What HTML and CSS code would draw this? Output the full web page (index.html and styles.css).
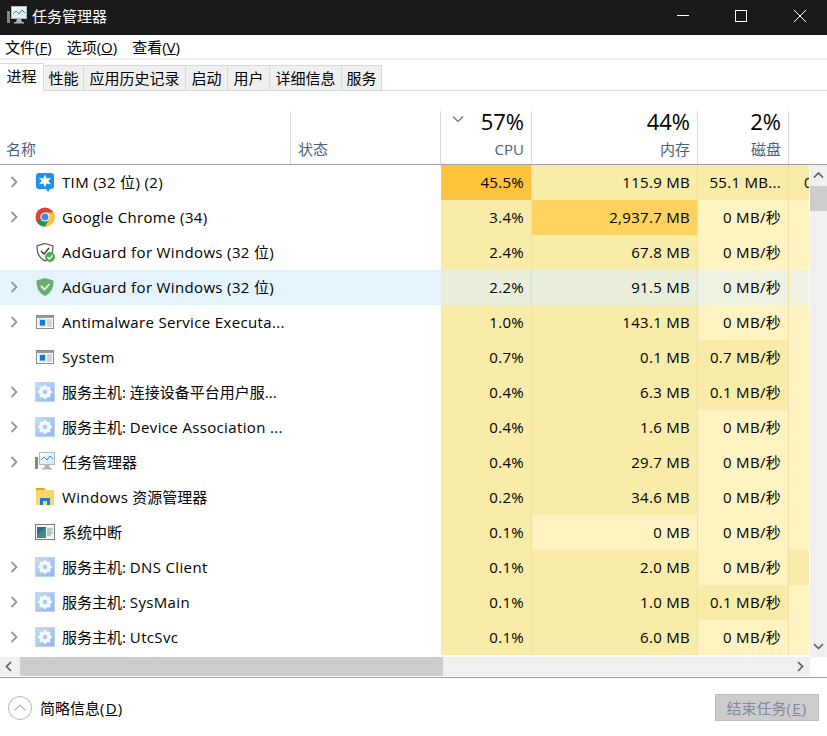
FILE: index.html
```html
<!DOCTYPE html>
<html lang="zh">
<head>
<meta charset="utf-8">
<title>任务管理器</title>
<link rel="stylesheet" href="styles.css">
</head>
<body>
<svg class="defs" width="0" height="0">
  <defs>
    <linearGradient id="gearbg" x1="0" y1="0" x2="1" y2="1"><stop offset="0" stop-color="#c3dcf6"/><stop offset="1" stop-color="#8fb6e6"/></linearGradient>
    <linearGradient id="screen" x1="0" y1="0" x2="1" y2="1"><stop offset="0" stop-color="#ffffff"/><stop offset="1" stop-color="#cfe6f8"/></linearGradient>
    <symbol id="arrow" viewBox="0 0 10 12"><path d="M2.500 1 7.500 6 2.500 11" fill="none" stroke="#969696" stroke-width="1.800"/></symbol>
    <symbol id="tm" viewBox="0 0 20 20">
      <rect x="0" y="5" width="3" height="12" fill="#7f8a80"/><rect x=".8" y="6" width="1.400" height="2" fill="#4fc04f"/>
      <rect x="4.500" y=".5" width="15" height="12" fill="url(#screen)" stroke="#b4b8bc"/>
      <path d="M6 8 9 5l3 3 3-4 3 3" fill="none" stroke="#2f88d8" stroke-width="1"/>
      <path d="M10 13h4l1 3h2v1.500H7V16h2z" fill="#b0b4b7"/>
    </symbol>
    <symbol id="gear" viewBox="0 0 20 20">
      <rect x=".5" y=".5" width="19" height="19" fill="url(#gearbg)" stroke="#bcd5f0"/>
      <circle cx="10" cy="10" r="4.500" fill="none" stroke="#f5f9fe" stroke-width="3"/>
      <path d="M10 3v14M3 10h14M5 5l10 10M15 5 5 15" stroke="#f5f9fe" stroke-width="2.200"/>
      <circle cx="10" cy="10" r="2.300" fill="#a9c8ee"/>
    </symbol>
    <symbol id="win" viewBox="0 0 18 14">
      <rect x=".5" y=".5" width="17" height="13" fill="#fff" stroke="#8b8b8b"/>
      <rect x="1" y="1" width="16" height="2" fill="#9a9a9a"/>
      <rect x="2.500" y="3.500" width="7.500" height="8" fill="#c5e0f6"/>
      <rect x="4" y="5" width="5" height="5.500" fill="#0f78d4"/>
      <path d="M11 5h5M11 7h5M11 9h5M11 11h5" stroke="#a8a8a8"/>
    </symbol>
  </defs>
</svg>

<div class="titlebar">
  <svg class="ticon" width="20" height="20"><use href="#tm"/></svg>
  <span class="ttext">任务管理器</span>
  <div class="winctl">
    <svg width="12" height="12" viewBox="0 0 12 12"><path d="M0 5.500h12" stroke="#fff"/></svg>
    <svg width="12" height="12" viewBox="0 0 12 12"><rect x=".5" y=".5" width="11" height="11" fill="none" stroke="#fff"/></svg>
    <svg class="closeic" width="12" height="12" viewBox="0 0 12 12"><path d="M0 0l12 12M12 0 0 12" stroke="#fff"/></svg>
  </div>
</div>

<div class="menubar">
  <span>文件(<u>F</u>)</span><span>选项(<u>O</u>)</span><span>查看(<u>V</u>)</span>
</div>

<div class="tabs">
  <span class="tab active">进程</span><span class="tab t2b">性能</span><span class="tab t4">应用历史记录</span><span class="tab t2">启动</span><span class="tab t2">用户</span><span class="tab t3">详细信息</span><span class="tab t2b">服务</span>
</div>

<div class="header">
  <div class="h-name hcell"><span class="hlabel">名称</span></div>
  <div class="h-status hcell"><span class="hlabel">状态</span></div>
  <div class="hcell num cpuhead">
    <svg class="sort" width="12" height="8" viewBox="0 0 12 8"><path d="M1 1.500 6 6.500 11 1.500" fill="none" stroke="#5f7490" stroke-width="1.200"/></svg>
    <span class="pct">57%</span><span class="hlabel">CPU</span>
  </div>
  <div class="hcell num"><span class="pct">44%</span><span class="hlabel">内存</span></div>
  <div class="hcell num"><span class="pct">2%</span><span class="hlabel">磁盘</span></div>
  <div class="hcell num clip"></div>
</div>

<div class="main">
  <div class="rows">
    <div class="row">
      <div class="name"><svg class="exp"><use href="#arrow"/></svg><svg class="ic" viewBox="0 0 20 20"><path d="M4 1h12q3 0 3 3v10q0 3-3 3h-1l-2 3-2-3H4q-3 0-3-3V4q0-3 3-3z" fill="#1e90f0"/><path d="M10 2.500l1.600 4 4.400-.8-2.800 3.300 2.800 3.300-4.400-.8-1.600 4-1.600-4-4.400.8 2.800-3.300L4 5.700l4.400.8z" fill="#fff"/></svg><span class="nm lat">TIM (32 位) (2)</span></div>
      <div class="c h4">45.5%</div><div class="c h1">115.9 MB</div><div class="c h1">55.1 MB...</div><div class="c h1 clipc">0</div>
    </div>
    <div class="row">
      <div class="name"><svg class="exp"><use href="#arrow"/></svg><svg class="ic" viewBox="0 0 20 20"><circle cx="10" cy="10" r="9.500" fill="#db4437"/><path d="M10 10 1.800 14.800A9.500 9.500 0 0 0 10 19.500L14 10.500z" fill="#0f9d58"/><path d="M1.800 5.200 1 10 1.800 14.800 10 10z" fill="#db4437"/><path d="M10 5.500h8.700A9.500 9.500 0 0 1 10 19.500l4-7z" fill="#fdc52f"/><circle cx="10" cy="10" r="4.600" fill="#fff"/><circle cx="10" cy="10" r="3.500" fill="#4285f4"/></svg><span class="nm lat">Google Chrome (34)</span></div>
      <div class="c h1">3.4%</div><div class="c h3">2,937.7 MB</div><div class="c h0">0 MB/秒</div><div class="c h0"></div>
    </div>
    <div class="row">
      <div class="name"><span class="exp"></span><svg class="ic" viewBox="0 0 20 20"><path d="M10 1.500 18 4c0 6-1 11-8 15C3 15 2 10 2 4z" fill="#fff" stroke="#555" stroke-width="1.200"/><path d="M6 9l3 3 5-6" fill="none" stroke="#333" stroke-width="1.400"/><circle cx="15" cy="15" r="5" fill="#4bae4f"/><path d="M12.500 15l2 2 3-3.500" fill="none" stroke="#fff" stroke-width="1.400"/></svg><span class="nm lat">AdGuard for Windows (32 位)</span></div>
      <div class="c h1">2.4%</div><div class="c h1">67.8 MB</div><div class="c h0">0 MB/秒</div><div class="c h0"></div>
    </div>
    <div class="row hover">
      <div class="name"><svg class="exp"><use href="#arrow"/></svg><svg class="ic" viewBox="0 0 20 20"><path d="M10 1 18.500 3.500C18.500 10 17 15.500 10 19 3 15.500 1.500 10 1.500 3.500z" fill="#68ae6c"/><path d="M6 9l3.500 3.500L14.500 7" fill="none" stroke="#e8f5e8" stroke-width="1.800"/></svg><span class="nm lat">AdGuard for Windows (32 位)</span></div>
      <div class="c s1">2.2%</div><div class="c s1">91.5 MB</div><div class="c s0">0 MB/秒</div><div class="c s0"></div>
    </div>
    <div class="row">
      <div class="name"><svg class="exp"><use href="#arrow"/></svg><svg class="ic winic"><use href="#win"/></svg><span class="nm lat">Antimalware Service Executa...</span></div>
      <div class="c h1">1.0%</div><div class="c h1">143.1 MB</div><div class="c h0">0 MB/秒</div><div class="c h0"></div>
    </div>
    <div class="row">
      <div class="name"><span class="exp"></span><svg class="ic winic"><use href="#win"/></svg><span class="nm lat">System</span></div>
      <div class="c h1">0.7%</div><div class="c h1">0.1 MB</div><div class="c h1">0.7 MB/秒</div><div class="c h0"></div>
    </div>
    <div class="row">
      <div class="name"><svg class="exp"><use href="#arrow"/></svg><svg class="ic"><use href="#gear"/></svg><span class="nm">服务主机: 连接设备平台用户服...</span></div>
      <div class="c h1">0.4%</div><div class="c h1">6.3 MB</div><div class="c h1">0.1 MB/秒</div><div class="c h0"></div>
    </div>
    <div class="row">
      <div class="name"><svg class="exp"><use href="#arrow"/></svg><svg class="ic"><use href="#gear"/></svg><span class="nm">服务主机: <span class="lat">Device Association ...</span></span></div>
      <div class="c h1">0.4%</div><div class="c h1">1.6 MB</div><div class="c h0">0 MB/秒</div><div class="c h0"></div>
    </div>
    <div class="row">
      <div class="name"><svg class="exp"><use href="#arrow"/></svg><svg class="ic"><use href="#tm"/></svg><span class="nm">任务管理器</span></div>
      <div class="c h1">0.4%</div><div class="c h1">29.7 MB</div><div class="c h0">0 MB/秒</div><div class="c h0"></div>
    </div>
    <div class="row">
      <div class="name"><span class="exp"></span><svg class="ic" viewBox="0 0 20 20"><path d="M1 1h8l2 2H1z" fill="#e2a614"/><rect x="1" y="3" width="18" height="15" fill="#fbd66a"/><path d="M5 18v-7h10v7h-3v-4H8v4z" fill="#1a7ed0"/></svg><span class="nm"><span class="lat">Windows</span> 资源管理器</span></div>
      <div class="c h1">0.2%</div><div class="c h1">34.6 MB</div><div class="c h0">0 MB/秒</div><div class="c h0"></div>
    </div>
    <div class="row">
      <div class="name"><span class="exp"></span><svg class="ic" viewBox="0 0 20 20"><rect x=".5" y="2.500" width="19" height="15" fill="#f4f4f4" stroke="#7b7f85"/><rect x="2" y="5" width="9" height="11" fill="#3f8f7d"/><path d="M2 5h9L2 13z" fill="#2d6b8f"/><path d="M12 7h6M12 9h5M12 11h6M12 13h4" stroke="#8aa08a"/></svg><span class="nm">系统中断</span></div>
      <div class="c h1">0.1%</div><div class="c h0">0 MB</div><div class="c h0">0 MB/秒</div><div class="c h0"></div>
    </div>
    <div class="row">
      <div class="name"><svg class="exp"><use href="#arrow"/></svg><svg class="ic"><use href="#gear"/></svg><span class="nm">服务主机: <span class="lat">DNS Client</span></span></div>
      <div class="c h1">0.1%</div><div class="c h1">2.0 MB</div><div class="c h0">0 MB/秒</div><div class="c h1"></div>
    </div>
    <div class="row">
      <div class="name"><svg class="exp"><use href="#arrow"/></svg><svg class="ic"><use href="#gear"/></svg><span class="nm">服务主机: <span class="lat">SysMain</span></span></div>
      <div class="c h1">0.1%</div><div class="c h1">1.0 MB</div><div class="c h1">0.1 MB/秒</div><div class="c h0"></div>
    </div>
    <div class="row">
      <div class="name"><svg class="exp"><use href="#arrow"/></svg><svg class="ic"><use href="#gear"/></svg><span class="nm">服务主机: <span class="lat">UtcSvc</span></span></div>
      <div class="c h1">0.1%</div><div class="c h1">6.0 MB</div><div class="c h0">0 MB/秒</div><div class="c h0"></div>
    </div>
  </div>
  <div class="vscroll">
    <svg class="sbtn" width="17" height="21" viewBox="0 0 17 21"><path d="M4 12.500 8.500 8 13 12.500" fill="none" stroke="#606060" stroke-width="1.700"/></svg>
    <div class="vtrack"><div class="vthumb"></div></div>
    <svg class="sbtn" width="17" height="21" viewBox="0 0 17 21"><path d="M4 8 8.500 12.500 13 8" fill="none" stroke="#606060" stroke-width="1.700"/></svg>
  </div>
</div>

<div class="hscroll">
  <div class="hbar">
    <svg class="hbtn" width="20" height="19" viewBox="0 0 20 19"><path d="M11 5 6.500 9.500 11 14" fill="none" stroke="#606060" stroke-width="1.700"/></svg>
    <div class="hthumb"></div>
    <svg class="hbtn rbtn" width="20" height="19" viewBox="0 0 20 19"><path d="M8 5 12.500 9.500 8 14" fill="none" stroke="#606060" stroke-width="1.700"/></svg>
  </div>
</div>

<div class="footer">
  <div class="less">
    <svg width="24" height="24" viewBox="0 0 24 24"><circle cx="12" cy="12" r="11.500" fill="none" stroke="#b4b4b4"/><path d="M6.500 14.500 12 9l5.500 5.500" fill="none" stroke="#b4b4b4" stroke-width="1.200"/></svg>
    <span>简略信息<span class="wide">(<u>D</u>)</span></span>
  </div>
  <div class="endtask">结束任务<span class="wide">(<u>E</u>)</span></div>
</div>
</body>
</html>
```

FILE: styles.css
```css
* { box-sizing: border-box; }
html, body { margin: 0; padding: 0; }
body {
  width: 827px; height: 736px; overflow: hidden; background: #fff; color: #000;
  font: 15px/20px "Open Sans", "Noto Sans CJK SC", sans-serif;
}
u { text-decoration: underline; text-underline-offset: 1px; text-decoration-thickness: 1px; }
.defs { position: absolute; }
.lat { letter-spacing: .35px; }
.wide { letter-spacing: 1.200px; }

.titlebar { height: 35px; background: #1a1a1a; color: #fff; display: flex; align-items: center; padding: 0 0 3px 7px; }
.ticon { margin-right: 5px; }
.winctl { margin-left: auto; display: flex; align-items: center; gap: 46px; padding-right: 21px; }
.closeic { margin-left: 1px; }

.menubar { height: 25px; border-bottom: 2px solid #f0f0f0; display: flex; gap: 15px; padding-left: 5px; align-items: center; white-space: nowrap; }

.tabs { height: 31px; display: flex; align-items: flex-end; border-bottom: 1px solid #d9d9d9; }
.tab { height: 25px; background: #f0f0f0; border: 1px solid #d9d9d9; border-left: 0; border-bottom: 0; display: flex; align-items: center; justify-content: center; white-space: nowrap; }
.tab.active { height: 28px; width: 44px; background: #fff; position: relative; top: 1px; padding-bottom: 3px; }
.t2 { width: 42px; }
.t2b { width: 40px; }
.t3 { width: 72px; }
.t4 { width: 102px; }

.header { height: 74px; border-bottom: 1px solid #a0a0a0; padding-top: 20px; display: grid; grid-template-columns: 291px 150px 91px 166px 91px 38px; grid-template-rows: 53px; }
.hcell { border-right: 1px solid #d9d9d9; display: flex; flex-direction: column; justify-content: flex-end; padding: 0 7px 5px 6px; position: relative; min-width: 0; }
.hlabel { color: #4c607a; line-height: 20px; }
.h-status { padding-left: 7px; }
.num { align-items: flex-end; }
.pct { font-size: 22px; line-height: 20px; margin-bottom: 8px; color: #000; }
.clip { border-right: 0; }
.sort { position: absolute; left: 11px; top: 4px; }

.main { display: flex; height: 492px; }
.rows { width: 810px; overflow: hidden; border-right: 1px solid #fff; }
.row { height: 35px; display: grid; grid-template-columns: 441px 91px 166px 91px 20px; align-items: stretch; }
.row.hover { background: #e5f3fd; }
.name { display: flex; align-items: center; min-width: 0; white-space: nowrap; padding-bottom: 2px; }
.exp { width: 10px; height: 12px; margin-left: 9px; flex: none; }
.ic { width: 20px; height: 20px; margin-left: 16px; margin-right: 7px; flex: none; }
.winic { height: 14px; width: 18px; margin-left: 17px; margin-right: 8px; }
.c { display: flex; align-items: center; justify-content: flex-end; padding: 0 7px 2px 0; border-right: 1px solid #f1dda5; white-space: nowrap; overflow: hidden; letter-spacing: .3px; min-width: 0; }
.c.clipc { justify-content: flex-start; padding: 0 0 2px 15px; }
.c:last-child { border-right: 0; }
.h0 { background: #fff3c1; }
.h1 { background: #f9eca8; }
.h3 { background: #fed25f; }
.h4 { background: #ffc33c; }
.s0 { background: #eff1e1; }
.s1 { background: #eaefdc; }

.vscroll { width: 17px; background: #f0f0f0; display: flex; flex-direction: column; }
.sbtn { flex: none; display: block; }
.vtrack { flex: 1; }
.vthumb { height: 25px; background: #cdcdcd; }

.hscroll { height: 20px; padding-right: 17px; }
.hbar { height: 19px; background: #f0f0f0; display: flex; }
.hthumb { width: 423px; background: #cdcdcd; }
.hbtn { flex: none; }
.rbtn { margin-left: auto; }

.footer { height: 59px; border-top: 1px solid #a0a0a0; display: flex; align-items: center; justify-content: space-between; padding: 1px 8px 0; }
.less { display: flex; align-items: center; gap: 8px; }
.endtask { width: 104px; height: 27px; background: #cccccc; border: 1px solid #bfbfbf; color: #8388a0; display: flex; align-items: center; justify-content: center; }
```
